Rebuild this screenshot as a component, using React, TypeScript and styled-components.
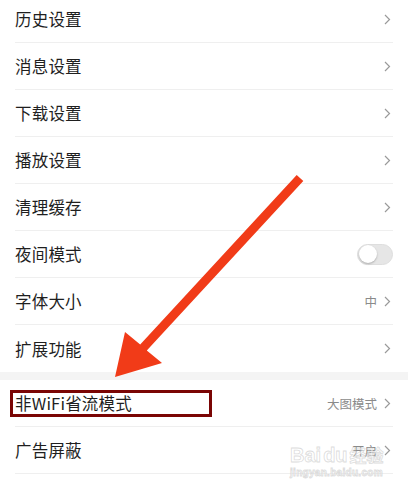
import React from "react";
import styled, { createGlobalStyle } from "styled-components";

const Global = createGlobalStyle`
  html, body { margin: 0; padding: 0; background: #fff; }
  body { font-family: "Noto Sans CJK SC", "Noto Sans", sans-serif; }
`;

const Page = styled.div`
  position: relative;
  width: 408px;
  height: 491px;
  overflow: hidden;
  background: #fff;
`;

const List = styled.div`
  display: flex;
  flex-direction: column;
  margin-top: -4px;
`;

const Section = styled.div`
  display: flex;
  flex-direction: column;
`;

const Band = styled.div`
  height: 8px;
  background: #f4f4f4;
`;

const Row = styled.div<{ $last?: boolean }>`
  box-sizing: border-box;
  height: 47px;
  margin: 0 15px;
  display: flex;
  align-items: center;
  justify-content: space-between;
  border-bottom: ${(p) => (p.$last ? "none" : "1px solid #efefef")};
`;

const Label = styled.span<{ $boxed?: boolean }>`
  font-size: 16.5px;
  color: #1f1f1f;
  letter-spacing: 0.2px;
  ${(p) =>
    p.$boxed &&
    `
    box-sizing: border-box;
    width: 202px;
    height: 27px;
    margin-left: -5px;
    padding-left: 2px;
    border: 3px solid #7a0504;
    display: flex;
    align-items: center;
  `}
`;

const Right = styled.div`
  display: flex;
  align-items: center;
  gap: 7px;
  margin-right: 2px;
`;

const Value = styled.span`
  font-size: 12.5px;
  color: #8a8a8a;
`;

const Chevron = styled.svg`
  width: 7px;
  height: 11px;
  display: block;
`;

const Toggle = styled.div`
  box-sizing: border-box;
  width: 36px;
  height: 21px;
  border-radius: 11px;
  background: #e6e6e6;
  border: 1px solid #dedede;
  display: flex;
  align-items: center;
  padding: 0 1px;
`;

const Knob = styled.div`
  width: 18px;
  height: 18px;
  border-radius: 50%;
  background: #fff;
  box-shadow: 0 1px 2px rgba(0, 0, 0, 0.25);
`;

const ArrowSvg = styled.svg`
  position: absolute;
  left: 0;
  top: 0;
  width: 408px;
  height: 491px;
  pointer-events: none;
`;

const Watermark = styled.div`
  position: absolute;
  left: 290px;
  top: 444px;
  display: flex;
  flex-direction: column;
  align-items: flex-start;
  color: rgba(255, 255, 255, 0.6);
  -webkit-text-stroke: 0.8px rgba(190, 190, 190, 0.55);
  font-family: "Liberation Sans", Arial, sans-serif;
  pointer-events: none;
`;

const MarkTop = styled.div`
  font-size: 20px;
  font-weight: bold;
  line-height: 22px;
  display: flex;
  align-items: center;
  gap: 2px;
`;

const MarkCJK = styled.span`
  font-family: "Noto Sans CJK SC", sans-serif;
  font-size: 17px;
`;

const MarkUrl = styled.div`
  font-size: 10px;
  font-weight: bold;
  line-height: 12px;
  margin-top: 1px;
  letter-spacing: 0.3px;
`;

const ChevronIcon = () => (
  <Chevron viewBox="0 0 7 11">
    <path d="M1 1 L5.5 5.5 L1 10" fill="none" stroke="#9a9a9a" strokeWidth="1.2" />
  </Chevron>
);

type Item = { label: string; value?: string; toggle?: boolean; boxed?: boolean };

const first: Item[] = [
  { label: "历史设置" },
  { label: "消息设置" },
  { label: "下载设置" },
  { label: "播放设置" },
  { label: "清理缓存" },
  { label: "夜间模式", toggle: true },
  { label: "字体大小", value: "中" },
  { label: "扩展功能" },
];

const second: Item[] = [
  { label: "非WiFi省流模式", value: "大图模式", boxed: true },
  { label: "广告屏蔽", value: "开启" },
];

const SettingRow = ({ item, last }: { item: Item; last?: boolean }) => (
  <Row $last={last}>
    <Label $boxed={item.boxed}>{item.label}</Label>
    {item.toggle ? (
      <Toggle>
        <Knob />
      </Toggle>
    ) : (
      <Right>
        {item.value && <Value>{item.value}</Value>}
        <ChevronIcon />
      </Right>
    )}
  </Row>
);

export default function App() {
  return (
    <>
      <Global />
      <Page>
        <List>
          <Section>
            {first.map((it, i) => (
              <SettingRow key={it.label} item={it} last={i === first.length - 1} />
            ))}
          </Section>
          <Band />
          <Section>
            {second.map((it) => (
              <SettingRow key={it.label} item={it} />
            ))}
          </Section>
        </List>
        <ArrowSvg viewBox="0 0 408 491">
          <polygon
            points="296.7,174.9 303.3,181.1 146.8,350.6 162,363 115,377 125,332 140.2,344.4"
            fill="#f13b18"
          />
        </ArrowSvg>
        <Watermark>
          <MarkTop>
            <span>Bai</span>
            <span>du</span>
            <MarkCJK>经验</MarkCJK>
          </MarkTop>
          <MarkUrl>jingyan.baidu.com</MarkUrl>
        </Watermark>
      </Page>
    </>
  );
}
